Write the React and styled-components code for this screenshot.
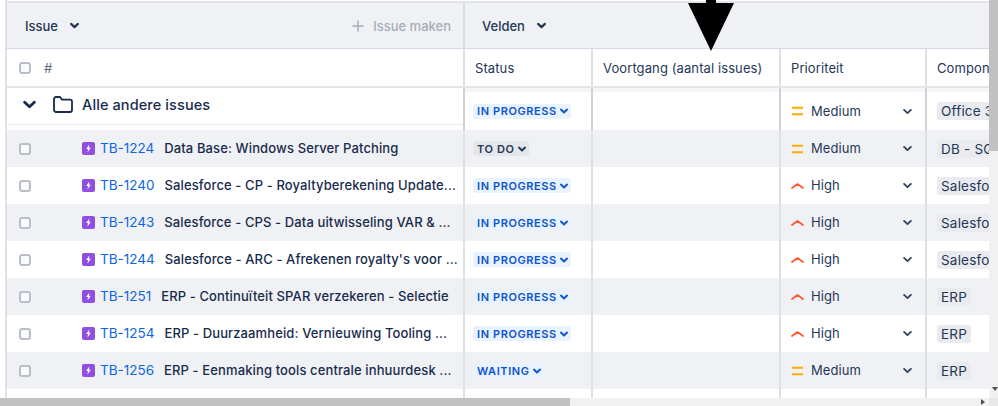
import React from "react";
import styled, { createGlobalStyle } from "styled-components";

const rows = [
  { key: "TB-1224", title: "Data Base: Windows Server Patching", status: "TO DO", priority: "Medium", comp: "DB - SQL" },
  { key: "TB-1240", title: "Salesforce - CP - Royaltyberekening Update...", status: "IN PROGRESS", priority: "High", comp: "Salesforce" },
  { key: "TB-1243", title: "Salesforce - CPS - Data uitwisseling VAR & ...", status: "IN PROGRESS", priority: "High", comp: "Salesforce" },
  { key: "TB-1244", title: "Salesforce - ARC - Afrekenen royalty's voor ...", status: "IN PROGRESS", priority: "High", comp: "Salesforce" },
  { key: "TB-1251", title: "ERP - Continuïteit SPAR verzekeren - Selectie", status: "IN PROGRESS", priority: "High", comp: "ERP" },
  { key: "TB-1254", title: "ERP - Duurzaamheid: Vernieuwing Tooling ...", status: "IN PROGRESS", priority: "High", comp: "ERP" },
  { key: "TB-1256", title: "ERP - Eenmaking tools centrale inhuurdesk ...", status: "WAITING", priority: "Medium", comp: "ERP" },
];

const Chevron = ({ size = 8, width = 2 }) => (
  <svg width={size} height={size} viewBox="0 0 8 8" fill="none">
    <path d="M1 2.6 L4 5.4 L7 2.6" stroke="currentColor" strokeWidth={width} strokeLinecap="round" strokeLinejoin="round" />
  </svg>
);

const StoryIcon = () => (
  <svg width="13" height="13" viewBox="0 0 13 13">
    <rect width="13" height="13" rx="2" fill="#904ee2" />
    <path d="M7.3 2.6 L4.2 7.1 H6 L5.5 10.4 L8.8 5.8 H7 Z" fill="#fff" />
  </svg>
);

const PriorityIcon = ({ level }) =>
  level === "High" ? (
    <svg width="14" height="10" viewBox="0 0 14 10" fill="none">
      <path d="M1 7 L6.5 3 L12 7" stroke="#ff5630" strokeWidth="1.7" strokeLinecap="round" strokeLinejoin="round" />
    </svg>
  ) : (
    <svg width="14" height="10" viewBox="0 0 14 10" fill="none">
      <path d="M1 1.7 H12 M1 8.3 H12" stroke="#ffab00" strokeWidth="2" />
    </svg>
  );

const FolderIcon = () => (
  <svg width="20" height="17" viewBox="0 0 20 17" fill="none">
    <path
      d="M1 3 a2 2 0 0 1 2-2 h4 l2 2.6 h8 a2 2 0 0 1 2 2 V14 a2 2 0 0 1-2 2 H3 a2 2 0 0 1-2-2 Z"
      stroke="#172b4d"
      strokeWidth="1.8"
      strokeLinejoin="round"
    />
  </svg>
);

const PlusIcon = () => (
  <svg width="12" height="12" viewBox="0 0 12 12" fill="none">
    <path d="M6 0.5 V11.5 M0.5 6 H11.5" stroke="#b3bac5" strokeWidth="1.8" />
  </svg>
);

const Status = ({ label }) => (
  <StatusPill $todo={label === "TO DO"}>
    {label}
    <Chevron size={8} />
  </StatusPill>
);

const Priority = ({ level }) => (
  <PriorityWrap>
    <PriorityIcon level={level} />
    <PriorityLabel>{level}</PriorityLabel>
    <PriorityChevron>
      <Chevron size={9} width={1.7} />
    </PriorityChevron>
  </PriorityWrap>
);

const App = () => (
  <Page>
    <GlobalStyle />
    <Middle>
      <Board>
        <Arrow>
          <svg width="46" height="51" viewBox="0 0 46 51">
            <path d="M18 0 H28 V3 H46 L23 51 L0 3 H18 Z" fill="#000" />
          </svg>
        </Arrow>
        <Toolbar>
          <ToolLeft>
            <ToolMenu>
              Issue
              <Chevron size={9} />
            </ToolMenu>
            <CreateIssue>
              <PlusIcon />
              Issue maken
            </CreateIssue>
          </ToolLeft>
          <ToolRight>
            <ToolMenu>
              Velden
              <Chevron size={9} />
            </ToolMenu>
          </ToolRight>
        </Toolbar>
        <Row $header>
          <IssueCell>
            <Checkbox />
            <Hash>#</Hash>
          </IssueCell>
          <Cell>Status</Cell>
          <Cell>Voortgang (aantal issues)</Cell>
          <Cell>Prioriteit</Cell>
          <Cell>Compon</Cell>
        </Row>
        <Row $group>
          <IssueCell $group>
            <GroupChevron>
              <Chevron size={13} width={1.7} />
            </GroupChevron>
            <FolderIcon />
            <GroupTitle>Alle andere issues</GroupTitle>
          </IssueCell>
          <Cell $group>
            <Status label="IN PROGRESS" />
          </Cell>
          <Cell $group />
          <Cell $group>
            <Priority level="Medium" />
          </Cell>
          <Cell $group>
            <Tag>Office 365</Tag>
          </Cell>
        </Row>
        {rows.map((row, i) => (
          <Row key={row.key} $alt={i % 2 === 0}>
            <IssueCell>
              <Checkbox />
              <IssueType>
                <StoryIcon />
              </IssueType>
              <IssueKey>{row.key}</IssueKey>
              <IssueTitle>{row.title}</IssueTitle>
            </IssueCell>
            <Cell>
              <Status label={row.status} />
            </Cell>
            <Cell />
            <Cell>
              <Priority level={row.priority} />
            </Cell>
            <Cell>
              <Tag>{row.comp}</Tag>
            </Cell>
          </Row>
        ))}
        <Row $tail>
          <IssueCell />
          <Cell />
          <Cell />
          <Cell />
          <Cell />
        </Row>
      </Board>
      <VerticalBar>
        <VerticalThumb />
        <ArrowDown />
      </VerticalBar>
    </Middle>
    <HorizontalBar>
      <HorizontalThumb />
      <ArrowRight />
      <ScrollCorner />
    </HorizontalBar>
  </Page>
);

const GlobalStyle = createGlobalStyle`
  html, body {
    margin: 0;
    padding: 0;
    background: #fff;
    overflow: hidden;
  }
  body {
    font-family: Inter, "Liberation Sans", sans-serif;
    color: #172b4d;
  }
`;

const Page = styled.div`
  width: 998px;
  height: 406px;
  display: flex;
  flex-direction: column;
  overflow: hidden;
`;

const Middle = styled.div`
  display: flex;
  flex: 1;
  min-height: 0;
`;

const Board = styled.div`
  position: relative;
  flex: 1;
  min-width: 0;
  margin-left: 5px;
  padding-top: 1px;
  border-left: 2px solid #dfe1e9;
  overflow: hidden;
`;

const Arrow = styled.div`
  position: absolute;
  left: 681px;
  top: 0;
  line-height: 0;
`;

const Toolbar = styled.div`
  display: grid;
  grid-template-columns: 458px 1fr;
  box-sizing: border-box;
  height: 48px;
  background: #f0f1f4;
  border-top: 2px solid #e2e4ea;
  border-bottom: 1px solid #d3d7e6;
`;

const ToolLeft = styled.div`
  display: flex;
  align-items: center;
  justify-content: space-between;
  padding: 0 12px 0 18px;
  border-right: 2px solid #dcdfe6;
`;

const ToolRight = styled.div`
  display: flex;
  align-items: center;
  padding-left: 17px;
`;

const ToolMenu = styled.div`
  display: flex;
  align-items: center;
  gap: 12px;
  font-size: 13px;
  font-weight: 500;
  color: #253858;
`;

const CreateIssue = styled.div`
  display: flex;
  align-items: center;
  gap: 9px;
  font-size: 13px;
  font-weight: 500;
  color: #a5adba;
`;

const Row = styled.div`
  display: grid;
  grid-template-columns: 456px 128px 188px 146px 1fr;
  height: ${(p) => (p.$group ? "42px" : p.$tail ? "20px" : "37px")};
  background: ${(p) => (p.$alt ? "#f0f1f4" : "#fff")};
  border-bottom: ${(p) => (p.$header ? "2px solid #e4e5e9" : "none")};
  font-size: 13px;
`;

const Cell = styled.div`
  display: flex;
  align-items: center;
  box-sizing: border-box;
  padding-left: 10px;
  min-width: 0;
  overflow: hidden;
  white-space: nowrap;
  border-left: 2px solid #dee0e6;
  color: #253858;
  letter-spacing: 0.1px;
  ${(p) =>
    p.$group &&
    `
    padding-top: 4px;
    border-left-color: #d0d2d9;
    background: linear-gradient(#f4f5f7 0, #f4f5f7 4px, transparent 4px);
  `}
`;

const IssueCell = styled.div`
  display: flex;
  align-items: center;
  padding-left: 12px;
  min-width: 0;
  ${(p) =>
    p.$group &&
    `
    box-sizing: border-box;
    padding-left: 16px;
    padding-bottom: 3px;
    height: 37px;
    border-bottom: 1px solid #e8e9ed;
  `}
`;

const Checkbox = styled.span`
  width: 8px;
  height: 8px;
  flex: none;
  border: 2px solid #b9bec9;
  border-radius: 3px;
  background: #fafbfc;
`;

const Hash = styled.span`
  margin-left: 13px;
  font-size: 13px;
  color: #5e6c84;
`;

const GroupChevron = styled.span`
  display: flex;
  width: 30px;
  flex: none;
  color: #172b4d;
`;

const GroupTitle = styled.span`
  margin-left: 9px;
  font-size: 14.5px;
  font-weight: 500;
  letter-spacing: 0.1px;
  color: #172b4d;
`;

const IssueType = styled.span`
  display: flex;
  margin-left: 51px;
`;

const IssueKey = styled.span`
  margin-left: 5px;
  margin-bottom: 1px;
  font-size: 13.5px;
  color: #0c66e4;
  flex: none;
`;

const IssueTitle = styled.span`
  margin-left: 10px;
  margin-bottom: 2px;
  font-size: 13px;
  font-weight: 500;
  letter-spacing: 0.12px;
  white-space: nowrap;
  color: #172b4d;
`;

const StatusPill = styled.span`
  display: inline-flex;
  align-items: center;
  gap: 3px;
  height: 15px;
  padding: 0 3px 0 4px;
  margin-left: -2px;
  border-radius: 3px;
  font-size: 11px;
  font-weight: 600;
  letter-spacing: 0.6px;
  background: ${(p) => (p.$todo ? "#e4e6ea" : "#e9f2ff")};
  color: ${(p) => (p.$todo ? "#253858" : "#0c55cc")};
`;

const PriorityWrap = styled.div`
  display: flex;
  align-items: center;
  width: 100%;
  font-size: 13px;
`;

const PriorityLabel = styled.span`
  margin-left: 6px;
  margin-bottom: 1px;
  color: #253858;
`;

const PriorityChevron = styled.span`
  display: flex;
  margin-left: auto;
  margin-right: 13px;
  color: #344563;
`;

const Tag = styled.span`
  display: inline-block;
  padding: 0 4px;
  line-height: 18px;
  border-radius: 3px;
  background: #e9ebef;
  font-size: 13.5px;
  letter-spacing: 0.2px;
  color: #253858;
`;

const VerticalBar = styled.div`
  position: relative;
  width: 9px;
  flex: none;
  background: #f1f1f1;
`;

const VerticalThumb = styled.div`
  height: 151px;
  background: #c1c1c1;
`;

const ArrowDown = styled.span`
  position: absolute;
  left: 3px;
  bottom: 7px;
  border-left: 3px solid transparent;
  border-right: 3px solid transparent;
  border-top: 4px solid #505050;
`;

const HorizontalBar = styled.div`
  position: relative;
  display: flex;
  height: 8px;
  flex: none;
  background: #f1f1f1;
`;

const HorizontalThumb = styled.div`
  width: 570px;
  height: 100%;
  background: #c1c1c1;
`;

const ScrollCorner = styled.div`
  width: 9px;
  height: 100%;
  margin-left: auto;
  background: #e8e8e8;
`;

const ArrowRight = styled.span`
  position: absolute;
  right: 13px;
  top: 1px;
  border-top: 3px solid transparent;
  border-bottom: 3px solid transparent;
  border-left: 4px solid #505050;
`;

export default App;
